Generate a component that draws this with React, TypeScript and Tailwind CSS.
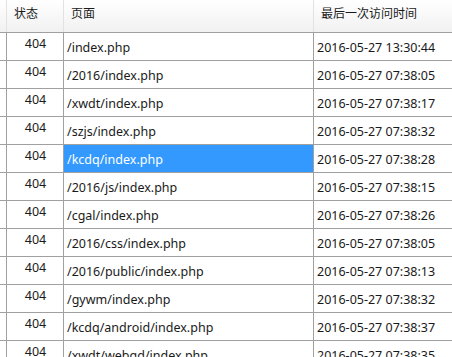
import React from "react";

const rows: { status: string; page: string; time: string }[] = [
  { status: "404", page: "/index.php", time: "2016-05-27 13:30:44" },
  { status: "404", page: "/2016/index.php", time: "2016-05-27 07:38:05" },
  { status: "404", page: "/xwdt/index.php", time: "2016-05-27 07:38:17" },
  { status: "404", page: "/szjs/index.php", time: "2016-05-27 07:38:32" },
  { status: "404", page: "/kcdq/index.php", time: "2016-05-27 07:38:28" },
  { status: "404", page: "/2016/js/index.php", time: "2016-05-27 07:38:15" },
  { status: "404", page: "/cgal/index.php", time: "2016-05-27 07:38:26" },
  { status: "404", page: "/2016/css/index.php", time: "2016-05-27 07:38:05" },
  { status: "404", page: "/2016/public/index.php", time: "2016-05-27 07:38:13" },
  { status: "404", page: "/gywm/index.php", time: "2016-05-27 07:38:32" },
  { status: "404", page: "/kcdq/android/index.php", time: "2016-05-27 07:38:37" },
  { status: "404", page: "/xwdt/webqd/index.php", time: "2016-05-27 07:38:35" },
];

const font = { fontFamily: '"Noto Sans", "Noto Sans CJK SC", sans-serif' };

export default function App() {
  const selected = 4;
  return (
    <div className="w-[452px] h-[357px] overflow-hidden bg-white text-[#1a1a1a]" style={font}>
      {/* header */}
      <div className="flex h-[33px] border-b border-[#a0a0a0] bg-gradient-to-b from-white to-[#f1f1f1] text-[12px]">
        <div className="w-[7px] border-r border-[#e2e2e2]" />
        <div className="w-[57px] border-r border-[#e2e2e2] pl-[7px] pt-[5px]">状态</div>
        <div className="w-[250px] border-r border-[#e2e2e2] pl-[7px] pt-[5px]">页面</div>
        <div className="flex-1 pl-[7px] pt-[5px]">最后一次访问时间</div>
      </div>
      {rows.map((r, i) => (
        <div key={i} className="flex h-[28px] border-b border-[#a0a0a0] text-[12.5px]">
          <div className="w-[7px] border-r border-[#a0a0a0]" />
          <div className="w-[57px] border-r border-[#a0a0a0] text-center pt-[2px] pl-[1px]">{r.status}</div>
          <div
            className={
              "w-[250px] border-r border-[#a0a0a0] pl-[3px] pt-[6px] " +
              (i === selected ? "bg-[#3399ff] text-white" : "")
            }
          >
            {r.page}
          </div>
          <div className="flex-1 pl-[3px] pt-[6px]">{r.time}</div>
        </div>
      ))}
    </div>
  );
}
